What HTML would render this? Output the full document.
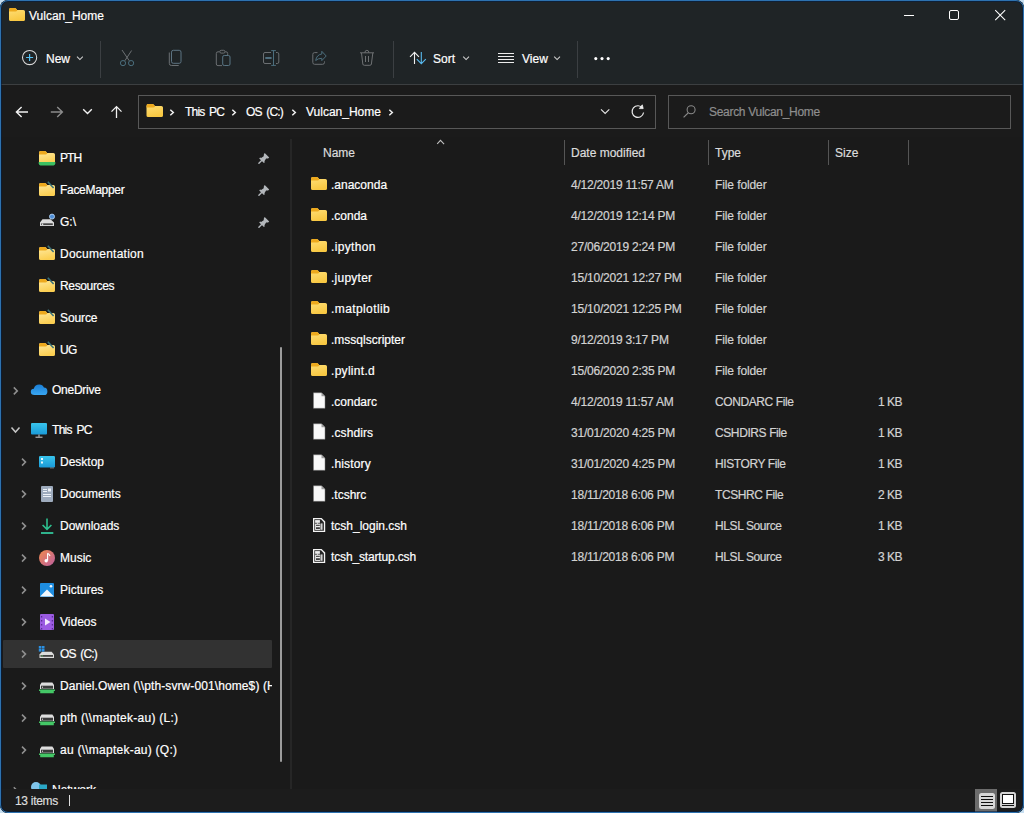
<!DOCTYPE html>
<html><head><meta charset="utf-8">
<style>
*{box-sizing:border-box;margin:0;padding:0}
html,body{width:1024px;height:813px;overflow:hidden;background:#c6def0}
body{font-family:"Liberation Sans",sans-serif;font-size:12px;color:#fff;position:relative}
.win{position:absolute;left:0;top:0;width:1024px;height:813px;border-radius:8px;overflow:hidden;background:#1a1a1a}
.a{position:absolute}
.t{position:absolute;white-space:nowrap;line-height:14px;font-size:12px;-webkit-text-stroke:0.2px currentColor}
.ov{position:absolute;left:0;top:0}
.border{position:absolute;left:0;top:0;width:1024px;height:813px;border:1px solid #2d72b0;border-radius:8px;box-shadow:inset 0 0 0 1px rgba(0,30,70,0.55)}
</style></head><body>
<div class="win">
<div class="a" style="left:0px;top:0px;width:1024px;height:84px;background:#1f2426;"></div>
<div class="a" style="left:0px;top:84px;width:1024px;height:1px;background:#3c3f41;"></div>
<div class="a" style="left:0px;top:85px;width:1024px;height:52px;background:#1b1b1b;"></div>
<div class="t" style="left:29px;top:9px">Vulcan_Home</div>
<div class="a" style="left:904px;top:15px;width:10px;height:1px;background:#ffffff;"></div>
<div class="t" style="left:46px;top:52px">New</div>
<div class="t" style="left:433px;top:52px">Sort</div>
<div class="t" style="left:522px;top:52px">View</div>
<div class="a" style="left:138px;top:95px;width:518px;height:34px;border:1px solid #585858"></div>
<div class="t" style="left:185px;top:105px;letter-spacing:-0.8px;word-spacing:2px">This PC</div>
<div class="t" style="left:246px;top:105px;letter-spacing:-0.8px;word-spacing:2px">OS (C:)</div>
<div class="t" style="left:306px;top:105px">Vulcan_Home</div>
<div class="a" style="left:668px;top:95px;width:343px;height:34px;border:1px solid #585858"></div>
<div class="t" style="left:709px;top:105px;color:#8e8e8e;letter-spacing:-0.3px">Search Vulcan_Home</div>
<div class="a" style="left:3px;top:640px;width:269px;height:28px;background:#323232;border-radius:1px"></div>
<div class="a" style="left:0;top:137px;width:272px;height:652px;overflow:hidden"><div class="t" style="left:60px;top:14px;letter-spacing:-0.9px">PTH</div><div class="t" style="left:60px;top:46px;letter-spacing:-0.3px">FaceMapper</div><div class="t" style="left:60px;top:78px">G:\</div><div class="t" style="left:60px;top:110px;letter-spacing:0.25px">Documentation</div><div class="t" style="left:60px;top:142px;letter-spacing:-0.35px">Resources</div><div class="t" style="left:60px;top:174px;letter-spacing:-0.1px">Source</div><div class="t" style="left:60px;top:206px;letter-spacing:-0.6px">UG</div><div class="t" style="left:52px;top:246px;letter-spacing:-0.25px">OneDrive</div><div class="t" style="left:52px;top:286px;letter-spacing:-0.7px;word-spacing:2px">This PC</div><div class="t" style="left:60px;top:318px">Desktop</div><div class="t" style="left:60px;top:350px">Documents</div><div class="t" style="left:60px;top:382px">Downloads</div><div class="t" style="left:60px;top:414px">Music</div><div class="t" style="left:60px;top:446px">Pictures</div><div class="t" style="left:60px;top:478px">Videos</div><div class="t" style="left:60px;top:510px;letter-spacing:-0.8px;word-spacing:2px">OS (C:)</div><div class="t" style="left:60px;top:542px;letter-spacing:0.1px;width:212px;overflow:hidden">Daniel.Owen (\\pth-svrw-001\home$) (H:)</div><div class="t" style="left:60px;top:574px;letter-spacing:0.25px">pth (\\maptek-au) (L:)</div><div class="t" style="left:60px;top:606px;letter-spacing:0.25px">au (\\maptek-au) (Q:)</div><div class="t" style="left:52px;top:646px">Network</div></div>
<div class="a" style="left:280px;top:347px;width:2px;height:415px;background:#9c9c9c;border-radius:1px"></div>
<div class="a" style="left:290px;top:139px;width:2px;height:650px;background:#262626;"></div>
<div class="t" style="left:323px;top:146px;color:#dcdcdc">Name</div>
<div class="t" style="left:571px;top:146px;color:#dcdcdc">Date modified</div>
<div class="t" style="left:715px;top:146px;color:#dcdcdc">Type</div>
<div class="t" style="left:835px;top:146px;color:#dcdcdc">Size</div>
<div class="t" style="left:331px;top:178px">.anaconda</div>
<div class="t" style="left:571px;top:178px;color:#d2d2d2;letter-spacing:-0.22px">4/12/2019 11:57 AM</div>
<div class="t" style="left:715px;top:178px;color:#d2d2d2;letter-spacing:-0.1px">File folder</div>
<div class="t" style="left:331px;top:209px">.conda</div>
<div class="t" style="left:571px;top:209px;color:#d2d2d2;letter-spacing:-0.22px">4/12/2019 12:14 PM</div>
<div class="t" style="left:715px;top:209px;color:#d2d2d2;letter-spacing:-0.1px">File folder</div>
<div class="t" style="left:331px;top:240px;letter-spacing:0.35px">.ipython</div>
<div class="t" style="left:571px;top:240px;color:#d2d2d2;letter-spacing:-0.22px">27/06/2019 2:24 PM</div>
<div class="t" style="left:715px;top:240px;color:#d2d2d2;letter-spacing:-0.1px">File folder</div>
<div class="t" style="left:331px;top:271px;letter-spacing:0.25px">.jupyter</div>
<div class="t" style="left:571px;top:271px;color:#d2d2d2;letter-spacing:-0.22px">15/10/2021 12:27 PM</div>
<div class="t" style="left:715px;top:271px;color:#d2d2d2;letter-spacing:-0.1px">File folder</div>
<div class="t" style="left:331px;top:302px;letter-spacing:0.4px">.matplotlib</div>
<div class="t" style="left:571px;top:302px;color:#d2d2d2;letter-spacing:-0.22px">15/10/2021 12:25 PM</div>
<div class="t" style="left:715px;top:302px;color:#d2d2d2;letter-spacing:-0.1px">File folder</div>
<div class="t" style="left:331px;top:333px">.mssqlscripter</div>
<div class="t" style="left:571px;top:333px;color:#d2d2d2;letter-spacing:-0.22px">9/12/2019 3:17 PM</div>
<div class="t" style="left:715px;top:333px;color:#d2d2d2;letter-spacing:-0.1px">File folder</div>
<div class="t" style="left:331px;top:364px;letter-spacing:0.3px">.pylint.d</div>
<div class="t" style="left:571px;top:364px;color:#d2d2d2;letter-spacing:-0.22px">15/06/2020 2:35 PM</div>
<div class="t" style="left:715px;top:364px;color:#d2d2d2;letter-spacing:-0.1px">File folder</div>
<div class="t" style="left:331px;top:395px">.condarc</div>
<div class="t" style="left:571px;top:395px;color:#d2d2d2;letter-spacing:-0.22px">4/12/2019 11:57 AM</div>
<div class="t" style="left:715px;top:395px;color:#d2d2d2;letter-spacing:-0.4px">CONDARC File</div>
<div class="t" style="left:802px;top:395px;width:100px;text-align:right;color:#d2d2d2;letter-spacing:-0.5px">1 KB</div>
<div class="t" style="left:331px;top:426px;letter-spacing:0.1px">.cshdirs</div>
<div class="t" style="left:571px;top:426px;color:#d2d2d2;letter-spacing:-0.22px">31/01/2020 4:25 PM</div>
<div class="t" style="left:715px;top:426px;color:#d2d2d2;letter-spacing:-0.4px">CSHDIRS File</div>
<div class="t" style="left:802px;top:426px;width:100px;text-align:right;color:#d2d2d2;letter-spacing:-0.5px">1 KB</div>
<div class="t" style="left:331px;top:457px;letter-spacing:0.15px">.history</div>
<div class="t" style="left:571px;top:457px;color:#d2d2d2;letter-spacing:-0.22px">31/01/2020 4:25 PM</div>
<div class="t" style="left:715px;top:457px;color:#d2d2d2;letter-spacing:-0.4px">HISTORY File</div>
<div class="t" style="left:802px;top:457px;width:100px;text-align:right;color:#d2d2d2;letter-spacing:-0.5px">1 KB</div>
<div class="t" style="left:331px;top:488px">.tcshrc</div>
<div class="t" style="left:571px;top:488px;color:#d2d2d2;letter-spacing:-0.22px">18/11/2018 6:06 PM</div>
<div class="t" style="left:715px;top:488px;color:#d2d2d2;letter-spacing:-0.4px">TCSHRC File</div>
<div class="t" style="left:802px;top:488px;width:100px;text-align:right;color:#d2d2d2;letter-spacing:-0.5px">2 KB</div>
<div class="t" style="left:331px;top:519px">tcsh_login.csh</div>
<div class="t" style="left:571px;top:519px;color:#d2d2d2;letter-spacing:-0.22px">18/11/2018 6:06 PM</div>
<div class="t" style="left:715px;top:519px;color:#d2d2d2;letter-spacing:-0.4px">HLSL Source</div>
<div class="t" style="left:802px;top:519px;width:100px;text-align:right;color:#d2d2d2;letter-spacing:-0.5px">1 KB</div>
<div class="t" style="left:331px;top:550px;letter-spacing:-0.15px">tcsh_startup.csh</div>
<div class="t" style="left:571px;top:550px;color:#d2d2d2;letter-spacing:-0.22px">18/11/2018 6:06 PM</div>
<div class="t" style="left:715px;top:550px;color:#d2d2d2;letter-spacing:-0.4px">HLSL Source</div>
<div class="t" style="left:802px;top:550px;width:100px;text-align:right;color:#d2d2d2;letter-spacing:-0.5px">3 KB</div>
<div class="a" style="left:0px;top:789px;width:1024px;height:24px;background:#1c1c1c;"></div>
<div class="t" style="left:15px;top:794px;color:#dedede;letter-spacing:-0.3px">13 items</div>
<div class="a" style="left:69px;top:795px;width:1px;height:11px;background:#dedede;"></div>
<div class="a" style="left:975px;top:789px;width:22px;height:23px;background:#6c6c6c;"></div>
<div class="a" style="left:979px;top:793px;width:16px;height:16px;background:#d8d8d8;border-radius:2.5px"></div>
<div class="a" style="left:981px;top:796px;width:12px;height:1px;background:#111;"></div>
<div class="a" style="left:981px;top:799px;width:12px;height:1px;background:#111;"></div>
<div class="a" style="left:981px;top:802px;width:12px;height:1px;background:#111;"></div>
<div class="a" style="left:981px;top:805px;width:12px;height:1px;background:#111;"></div>
<div class="a" style="left:1000px;top:792px;width:16px;height:16px;background:#d4d4d4;border-radius:2.5px"></div>
<div class="a" style="left:1002px;top:794px;width:12px;height:10px;background:#fff;border:1px solid #111"></div>
<div class="a" style="left:1002px;top:805px;width:12px;height:1px;background:#111;"></div>
<svg class="ov" width="1024" height="813" viewBox="0 0 1024 813"><defs>
<linearGradient id="fg" x1="0" y1="0" x2="0.3" y2="1"><stop offset="0" stop-color="#ffe07a"/><stop offset="1" stop-color="#f8c843"/></linearGradient>
<linearGradient id="fgn" x1="0" y1="0" x2="0.3" y2="1"><stop offset="0" stop-color="#ffeba3"/><stop offset="1" stop-color="#fbcf52"/></linearGradient>
<linearGradient id="mg" x1="0" y1="0" x2="1" y2="1"><stop offset="0" stop-color="#f08a4c"/><stop offset="1" stop-color="#bd5fa0"/></linearGradient>
<linearGradient id="pc" x1="0" y1="0" x2="0" y2="1"><stop offset="0" stop-color="#38c4ec"/><stop offset="1" stop-color="#1a9ad8"/></linearGradient>
<linearGradient id="od" x1="0" y1="0" x2="0" y2="1"><stop offset="0" stop-color="#1b7fd6"/><stop offset="1" stop-color="#39a6f2"/></linearGradient>
<clipPath id="navclip"><rect x="0" y="137" width="272" height="652"/></clipPath>
</defs>
<path d="M9.0 10.3 Q9.0 8.0 10.6 8.0 H14.6 Q15.4 8.0 15.9 8.6 L17.1 9.9 H23.4 Q25.0 9.9 25.0 11.5 V19.4 Q25.0 21.0 23.4 21.0 H10.6 Q9.0 21.0 9.0 19.4Z" fill="url(#fg)"/>
<path d="M9.0 10.3 Q9.0 8.0 10.6 8.0 H14.6 Q15.4 8.0 15.9 8.6 L17.4 10.3 Q16.7 11.6 15.4 11.6 H9.0Z" fill="#eda91d"/>
<rect x="949.5" y="10.5" width="9" height="9" rx="1.5" fill="none" stroke="#fff" stroke-width="1"/>
<path d="M995.2 10.2 L1005.2 20.2 M1005.2 10.2 L995.2 20.2" stroke="#fff" stroke-width="1.05"/>
<circle cx="29.6" cy="57.5" r="7.1" fill="none" stroke="#dadada" stroke-width="1.05"/>
<path d="M29.6 54 V61 M26.1 57.5 H33.1" stroke="#55c0f2" stroke-width="1.2"/>
<path d="M77 56.6 L79.9 59.6 L82.8 56.6" fill="none" stroke="#d0d0d0" stroke-width="1.05"/>
<path d="M100.5 41 V78" stroke="#3b3f42" stroke-width="1"/>
<path d="M393.5 41 V78" stroke="#3b3f42" stroke-width="1"/>
<path d="M577.5 41 V78" stroke="#3b3f42" stroke-width="1"/>
<path d="M122 50 L129.3 60.8 M131.6 50.5 L124.8 60.8" stroke="#6d7174" stroke-width="1"/>
<circle cx="123" cy="63.1" r="2.6" fill="none" stroke="#4b6f7e" stroke-width="1"/><circle cx="131.1" cy="63.1" r="2.6" fill="none" stroke="#4b6f7e" stroke-width="1"/>
<rect x="171.5" y="50.3" width="9.5" height="13" rx="1.8" fill="none" stroke="#5d7483" stroke-width="1"/>
<path d="M169.3 52.5 V63.4 Q169.3 65.5 171.4 65.5 H178.7" fill="none" stroke="#6b7073" stroke-width="1"/>
<path d="M219.5 51.8 H218 Q216.3 51.8 216.3 53.5 V64 Q216.3 65.6 218 65.6 H222" fill="none" stroke="#6b6f72" stroke-width="1"/>
<path d="M225.2 51.8 H226 Q227.7 51.8 227.7 53.5 V55" fill="none" stroke="#6b6f72" stroke-width="1"/>
<rect x="219.8" y="50.3" width="5.2" height="2.8" rx="1.4" fill="none" stroke="#6b6f72" stroke-width="1"/>
<rect x="222.7" y="55.5" width="7.3" height="10" rx="1.5" fill="none" stroke="#587483" stroke-width="1"/>
<path d="M271 52.5 H265 Q263.5 52.5 263.5 54 V62 Q263.5 63.5 265 63.5 H271 M276 52.5 H277.3 Q278.8 52.5 278.8 54 V62 Q278.8 63.5 277.3 63.5 H276" fill="none" stroke="#6b6f72" stroke-width="1"/>
<path d="M273.5 50.5 V65.5 M271.2 50.6 H275.9 M271.2 65.4 H275.9" stroke="#4c6e7d" stroke-width="1"/>
<path d="M265.3 58 H271.6" stroke="#557888" stroke-width="1.8"/>
<path d="M317.5 52.6 H314.6 Q312.8 52.6 312.8 54.4 V62.4 Q312.8 64.3 314.6 64.3 H322.6 Q324.5 64.3 324.5 62.4 V61.4" fill="none" stroke="#6b6f72" stroke-width="1"/>
<path d="M321.8 51.3 L326.2 56 L321.8 60.6 V58.3 Q318 58.3 315.7 60.5 Q316.6 54.7 321.8 54 Z" fill="none" stroke="#4c6e7d" stroke-width="1" stroke-linejoin="round"/>
<path d="M360 52.8 H374 M364.9 52.8 Q364.9 50.3 366.9 50.3 Q368.9 50.3 368.9 52.8 M361.5 53 L362.8 64 Q363 65.3 364.3 65.3 H369.9 Q371.2 65.3 371.4 64 L372.8 53 M365.5 56 V62 M368.5 56 V62" fill="none" stroke="#6e7173" stroke-width="1"/>
<path d="M414.5 64 V52.3 M410 56.8 L414.5 52.3 L419 56.8" fill="none" stroke="#f0f0f0" stroke-width="1.1"/>
<path d="M421.3 52 V63.7 M416.8 59.2 L421.3 63.7 L425.8 59.2" fill="none" stroke="#58b9ee" stroke-width="1.1"/>
<path d="M463.2 56.6 L466.09999999999997 59.6 L469.0 56.6" fill="none" stroke="#d0d0d0" stroke-width="1.05"/>
<path d="M498 53.5 H514 M498 56.5 H514 M498 59.5 H514 M498 62.5 H514" stroke="#ececec" stroke-width="1.1"/>
<path d="M554.2 56.6 L557.1 59.6 L560.0 56.6" fill="none" stroke="#d0d0d0" stroke-width="1.05"/>
<circle cx="595.8" cy="58.6" r="1.55" fill="#fff"/>
<circle cx="602" cy="58.6" r="1.55" fill="#fff"/>
<circle cx="608.2" cy="58.6" r="1.55" fill="#fff"/>
<path d="M28 112 H16.8 M21.6 106.9 L16.4 112 L21.6 117.1" fill="none" stroke="#f2f2f2" stroke-width="1.4"/>
<path d="M50.8 112 H62 M57.2 106.9 L62.4 112 L57.2 117.1" fill="none" stroke="#8c8c8c" stroke-width="1.4"/>
<path d="M83.2 109.3 L87.5 113.6 L91.8 109.3" fill="none" stroke="#f2f2f2" stroke-width="1.4"/>
<path d="M116.5 118 V106.6 M111.5 111.6 L116.5 106.6 L121.5 111.6" fill="none" stroke="#f2f2f2" stroke-width="1.3"/>
<path d="M146.5 106.3 Q146.5 104.0 148.15 104.0 H152.28 Q153.1 104.0 153.62 104.6 L154.85 105.9 H161.35 Q163.0 105.9 163.0 107.5 V115.4 Q163.0 117.0 161.35 117.0 H148.15 Q146.5 117.0 146.5 115.4Z" fill="url(#fg)"/>
<path d="M146.5 106.3 Q146.5 104.0 148.15 104.0 H152.28 Q153.1 104.0 153.62 104.6 L155.16 106.3 Q154.44 107.6 153.1 107.6 H146.5Z" fill="#eda91d"/>
<path d="M170.3 109.8 L173.3 112.5 L170.3 115.2" fill="none" stroke="#f0f0f0" stroke-width="1.5"/>
<path d="M232.3 109.8 L235.3 112.5 L232.3 115.2" fill="none" stroke="#f0f0f0" stroke-width="1.5"/>
<path d="M292.3 109.8 L295.3 112.5 L292.3 115.2" fill="none" stroke="#f0f0f0" stroke-width="1.5"/>
<path d="M389.3 109.8 L392.3 112.5 L389.3 115.2" fill="none" stroke="#f0f0f0" stroke-width="1.5"/>
<path d="M601 109.3 L605.15 113.5 L609.3 109.3" fill="none" stroke="#e6e6e6" stroke-width="1.1"/>
<path d="M642.6 108.2 A5.8 5.8 0 1 0 643.6 112.5" fill="none" stroke="#eeeeee" stroke-width="1.2"/>
<path d="M642.3 104.8 L643.2 108.6 L639.3 108.6Z" fill="#eeeeee" stroke="#eeeeee" stroke-width="0.8" stroke-linejoin="round"/>
<circle cx="691.1" cy="109.7" r="4" fill="none" stroke="#8a8a8a" stroke-width="1.05"/>
<path d="M688.2 112.8 L683.6 117.4" stroke="#8a8a8a" stroke-width="1.2"/>
<g clip-path="url(#navclip)"><path d="M39.0 153.3 Q39.0 151.0 40.6 151.0 H44.6 Q45.4 151.0 45.9 151.6 L47.1 152.9 H53.4 Q55.0 152.9 55.0 154.5 V162.4 Q55.0 164.0 53.4 164.0 H40.6 Q39.0 164.0 39.0 162.4Z" fill="url(#fgn)"/><path d="M39.0 153.3 Q39.0 151.0 40.6 151.0 H44.6 Q45.4 151.0 45.9 151.6 L47.4 153.3 Q46.7 154.6 45.4 154.6 H39.0Z" fill="#eda91d"/><path d="M38.7 162.0 H55.3 V163.6 Q55.3 165.4 53.6 165.4 H40.4 Q38.7 165.4 38.7 163.6Z" fill="#3cc062"/><path d="M264.7 153.10000000000002 L269.2 157.60000000000002 L268.1 158.4 L266.1 158.60000000000002 L264.4 161.20000000000002 L264.8 162.20000000000002 L263.9 163.10000000000002 L259.2 158.4 L260.1 157.5 L261.1 157.9 L263.7 156.20000000000002 L263.9 154.20000000000002Z" fill="#b3b7bb"/><path d="M261.9 160.20000000000002 L258.9 163.20000000000002" stroke="#b3b7bb" stroke-width="1.4" stroke-linecap="round"/><path d="M39.0 185.3 Q39.0 183.0 40.6 183.0 H44.6 Q45.4 183.0 45.9 183.6 L47.1 184.9 H53.4 Q55.0 184.9 55.0 186.5 V194.4 Q55.0 196.0 53.4 196.0 H40.6 Q39.0 196.0 39.0 194.4Z" fill="url(#fgn)"/><path d="M39.0 185.3 Q39.0 183.0 40.6 183.0 H44.6 Q45.4 183.0 45.9 183.6 L47.4 185.3 Q46.7 186.6 45.4 186.6 H39.0Z" fill="#eda91d"/><path d="M47.8 181.7 L53.6 188.0" stroke="#3b727b" stroke-width="1.6"/><path d="M264.7 185.10000000000002 L269.2 189.60000000000002 L268.1 190.4 L266.1 190.60000000000002 L264.4 193.20000000000002 L264.8 194.20000000000002 L263.9 195.10000000000002 L259.2 190.4 L260.1 189.5 L261.1 189.9 L263.7 188.20000000000002 L263.9 186.20000000000002Z" fill="#b3b7bb"/><path d="M261.9 192.20000000000002 L258.9 195.20000000000002" stroke="#b3b7bb" stroke-width="1.4" stroke-linecap="round"/><path d="M42.5 219.2 H50.5 L54 222.6 V226 H40 V222.6Z" fill="#dcdcdc"/><rect x="41.2" y="223.3" width="11.6" height="1.8" fill="#444"/><rect x="42" y="223.6" width="1.2" height="1.2" fill="#fff"/><circle cx="52" cy="216.6" r="2.5" fill="#4f8fd8" stroke="#b4d4f4" stroke-width="0.9"/><path d="M264.7 217.10000000000002 L269.2 221.60000000000002 L268.1 222.4 L266.1 222.60000000000002 L264.4 225.20000000000002 L264.8 226.20000000000002 L263.9 227.10000000000002 L259.2 222.4 L260.1 221.5 L261.1 221.9 L263.7 220.20000000000002 L263.9 218.20000000000002Z" fill="#b3b7bb"/><path d="M261.9 224.20000000000002 L258.9 227.20000000000002" stroke="#b3b7bb" stroke-width="1.4" stroke-linecap="round"/><path d="M39.0 249.3 Q39.0 247.0 40.6 247.0 H44.6 Q45.4 247.0 45.9 247.6 L47.1 248.9 H53.4 Q55.0 248.9 55.0 250.5 V258.4 Q55.0 260.0 53.4 260.0 H40.6 Q39.0 260.0 39.0 258.4Z" fill="url(#fgn)"/><path d="M39.0 249.3 Q39.0 247.0 40.6 247.0 H44.6 Q45.4 247.0 45.9 247.6 L47.4 249.3 Q46.7 250.6 45.4 250.6 H39.0Z" fill="#eda91d"/><path d="M47.8 245.7 L53.6 252.0" stroke="#3b727b" stroke-width="1.6"/><path d="M39.0 281.3 Q39.0 279.0 40.6 279.0 H44.6 Q45.4 279.0 45.9 279.6 L47.1 280.9 H53.4 Q55.0 280.9 55.0 282.5 V290.4 Q55.0 292.0 53.4 292.0 H40.6 Q39.0 292.0 39.0 290.4Z" fill="url(#fgn)"/><path d="M39.0 281.3 Q39.0 279.0 40.6 279.0 H44.6 Q45.4 279.0 45.9 279.6 L47.4 281.3 Q46.7 282.6 45.4 282.6 H39.0Z" fill="#eda91d"/><path d="M47.8 277.7 L53.6 284.0" stroke="#3b727b" stroke-width="1.6"/><path d="M39.0 313.3 Q39.0 311.0 40.6 311.0 H44.6 Q45.4 311.0 45.9 311.6 L47.1 312.9 H53.4 Q55.0 312.9 55.0 314.5 V322.4 Q55.0 324.0 53.4 324.0 H40.6 Q39.0 324.0 39.0 322.4Z" fill="url(#fgn)"/><path d="M39.0 313.3 Q39.0 311.0 40.6 311.0 H44.6 Q45.4 311.0 45.9 311.6 L47.4 313.3 Q46.7 314.6 45.4 314.6 H39.0Z" fill="#eda91d"/><path d="M47.8 309.7 L53.6 316.0" stroke="#3b727b" stroke-width="1.6"/><path d="M39.0 345.3 Q39.0 343.0 40.6 343.0 H44.6 Q45.4 343.0 45.9 343.6 L47.1 344.9 H53.4 Q55.0 344.9 55.0 346.5 V354.4 Q55.0 356.0 53.4 356.0 H40.6 Q39.0 356.0 39.0 354.4Z" fill="url(#fgn)"/><path d="M39.0 345.3 Q39.0 343.0 40.6 343.0 H44.6 Q45.4 343.0 45.9 343.6 L47.4 345.3 Q46.7 346.6 45.4 346.6 H39.0Z" fill="#eda91d"/><path d="M47.8 341.7 L53.6 348.0" stroke="#3b727b" stroke-width="1.6"/><path d="M13.8 387.40000000000003 L17.3 390.90000000000003 L13.8 394.40000000000003" fill="none" stroke="#8f8f8f" stroke-width="1.55"/><path d="M34.5 395 Q30.8 395 30.8 391.8 Q30.8 389 33.8 388.8 Q35 384.6 39.3 384.6 Q42.7 384.6 43.9 387.6 Q47.4 387.9 47.4 391.4 Q47.4 395 44 395Z" fill="url(#od)"/><path d="M11.5 427.6 L15.5 432.0 L19.5 427.6" fill="none" stroke="#c4c4c4" stroke-width="1.55"/><rect x="31" y="423" width="16" height="11.5" rx="1" fill="url(#pc)"/><path d="M39 434.5 V436.8 M35.5 437.2 H42.5" stroke="#cfcfcf" stroke-width="1"/><path d="M22.0 458.6 L25.5 462.1 L22.0 465.6" fill="none" stroke="#8f8f8f" stroke-width="1.55"/><path d="M22.0 490.6 L25.5 494.1 L22.0 497.6" fill="none" stroke="#8f8f8f" stroke-width="1.55"/><path d="M22.0 522.5999999999999 L25.5 526.0999999999999 L22.0 529.5999999999999" fill="none" stroke="#8f8f8f" stroke-width="1.55"/><path d="M22.0 554.5999999999999 L25.5 558.0999999999999 L22.0 561.5999999999999" fill="none" stroke="#8f8f8f" stroke-width="1.55"/><path d="M22.0 586.5999999999999 L25.5 590.0999999999999 L22.0 593.5999999999999" fill="none" stroke="#8f8f8f" stroke-width="1.55"/><path d="M22.0 618.5999999999999 L25.5 622.0999999999999 L22.0 625.5999999999999" fill="none" stroke="#8f8f8f" stroke-width="1.55"/><path d="M22.0 650.5999999999999 L25.5 654.0999999999999 L22.0 657.5999999999999" fill="none" stroke="#8f8f8f" stroke-width="1.55"/><path d="M22.0 682.5999999999999 L25.5 686.0999999999999 L22.0 689.5999999999999" fill="none" stroke="#8f8f8f" stroke-width="1.55"/><path d="M22.0 714.5999999999999 L25.5 718.0999999999999 L22.0 721.5999999999999" fill="none" stroke="#8f8f8f" stroke-width="1.55"/><path d="M22.0 746.5999999999999 L25.5 750.0999999999999 L22.0 753.5999999999999" fill="none" stroke="#8f8f8f" stroke-width="1.55"/><rect x="39" y="456" width="16" height="11.5" rx="1.3" fill="url(#pc)"/><rect x="41" y="458" width="2" height="2" fill="#e6f6fc"/><rect x="41" y="461.5" width="2" height="2" fill="#e6f6fc"/><rect x="50.5" y="467.5" width="1" height="1" fill="#bbb"/><rect x="52.5" y="467.5" width="1" height="1" fill="#bbb"/><rect x="41" y="486" width="12" height="16" rx="1" fill="#9eabbd"/><path d="M43 489.5 H47 M43 491.5 H47 M43 494.5 H51 M43 496.5 H51" stroke="#eef2f8" stroke-width="1"/><rect x="48" y="488.5" width="3" height="3" fill="#eef2f8"/><path d="M47 518.5 V529.2 M42.6 525 L47 529.4 L51.4 525" fill="none" stroke="#2dbf8e" stroke-width="1.6"/><path d="M41 533 H53.3" stroke="#33c59a" stroke-width="1.8"/><circle cx="47" cy="558" r="8" fill="url(#mg)"/><path d="M47.6 553.3 V560.5 M47.6 553.3 Q49.6 554.4 50 556" fill="none" stroke="#fff" stroke-width="1.15"/><circle cx="46.2" cy="560.8" r="1.7" fill="#fff"/><rect x="40" y="583" width="14" height="14" rx="1" fill="#1e8de0"/><path d="M40 596.6 L47 589.6 L54 596.6Z" fill="#f2f7fc"/><circle cx="51" cy="586.3" r="1.3" fill="#f2f7fc"/><rect x="40" y="614" width="14" height="16" rx="1" fill="#9b5be2"/><path d="M45 618.5 V625.5 L50.5 622Z" fill="#f3eafd"/><path d="M41.6 616 V617.6 M41.6 620 V621.6 M41.6 624 V625.6 M41.6 628 V629.4 M52.4 616 V617.6 M52.4 620 V621.6 M52.4 624 V625.6 M52.4 628 V629.4" stroke="#5a2c98" stroke-width="1.3"/><path d="M42 651.8 H51.6 L54 654.4 V658 H39.5 V654.4Z" fill="#dcdcdc"/><rect x="40.5" y="655" width="12.5" height="1.8" fill="#444"/><rect x="41.5" y="655.3" width="1.2" height="1.2" fill="#6fd07a"/><rect x="38.8" y="646" width="2.6" height="2.6" fill="#2b90e2"/><rect x="41.9" y="646" width="2.6" height="2.6" fill="#2b90e2"/><rect x="38.8" y="649" width="2.6" height="2.6" fill="#2b90e2"/><rect x="41.9" y="649" width="2.6" height="2.6" fill="#2b90e2"/><path d="M41.6 682.5 H52.4 L54 685.1 V689.1 H40 V685.1Z" fill="#dddddd"/><rect x="41" y="685.7" width="12" height="3" fill="#3b3b3b"/><rect x="42" y="686.7" width="1" height="1" fill="#eee"/><path d="M39 689.5 H55 V691.1 H53.8 V693.3 H40.2 V691.1 H39Z" fill="#44c766"/><path d="M41.6 714.5 H52.4 L54 717.1 V721.1 H40 V717.1Z" fill="#dddddd"/><rect x="41" y="717.7" width="12" height="3" fill="#3b3b3b"/><rect x="42" y="718.7" width="1" height="1" fill="#eee"/><path d="M39 721.5 H55 V723.1 H53.8 V725.3 H40.2 V723.1 H39Z" fill="#44c766"/><path d="M41.6 746.5 H52.4 L54 749.1 V753.1 H40 V749.1Z" fill="#dddddd"/><rect x="41" y="749.7" width="12" height="3" fill="#3b3b3b"/><rect x="42" y="750.7" width="1" height="1" fill="#eee"/><path d="M39 753.5 H55 V755.1 H53.8 V757.3 H40.2 V755.1 H39Z" fill="#44c766"/><path d="M13.8 787.3 L17.3 790.8 L13.8 794.3" fill="none" stroke="#8f8f8f" stroke-width="1.55"/><circle cx="36" cy="787" r="5" fill="#7fc4ea"/><rect x="39" y="784.5" width="8" height="5" fill="#2aa7c6"/></g>
<path d="M437.2 143.8 L440.5 140.3 L444.1 144.1" fill="none" stroke="#c0c0c0" stroke-width="1.05"/>
<path d="M564.5 140 V165" stroke="#555" stroke-width="1"/>
<path d="M708.5 140 V165" stroke="#555" stroke-width="1"/>
<path d="M828.5 140 V165" stroke="#555" stroke-width="1"/>
<path d="M908.5 140 V165" stroke="#555" stroke-width="1"/>
<path d="M311.0 179.3 Q311.0 177.0 312.6 177.0 H316.6 Q317.4 177.0 317.9 177.6 L319.1 178.9 H325.4 Q327.0 178.9 327.0 180.5 V188.4 Q327.0 190.0 325.4 190.0 H312.6 Q311.0 190.0 311.0 188.4Z" fill="url(#fg)"/>
<path d="M311.0 179.3 Q311.0 177.0 312.6 177.0 H316.6 Q317.4 177.0 317.9 177.6 L319.4 179.3 Q318.7 180.6 317.4 180.6 H311.0Z" fill="#eda91d"/>
<path d="M311.0 210.3 Q311.0 208.0 312.6 208.0 H316.6 Q317.4 208.0 317.9 208.6 L319.1 209.9 H325.4 Q327.0 209.9 327.0 211.5 V219.4 Q327.0 221.0 325.4 221.0 H312.6 Q311.0 221.0 311.0 219.4Z" fill="url(#fg)"/>
<path d="M311.0 210.3 Q311.0 208.0 312.6 208.0 H316.6 Q317.4 208.0 317.9 208.6 L319.4 210.3 Q318.7 211.6 317.4 211.6 H311.0Z" fill="#eda91d"/>
<path d="M311.0 241.3 Q311.0 239.0 312.6 239.0 H316.6 Q317.4 239.0 317.9 239.6 L319.1 240.9 H325.4 Q327.0 240.9 327.0 242.5 V250.4 Q327.0 252.0 325.4 252.0 H312.6 Q311.0 252.0 311.0 250.4Z" fill="url(#fg)"/>
<path d="M311.0 241.3 Q311.0 239.0 312.6 239.0 H316.6 Q317.4 239.0 317.9 239.6 L319.4 241.3 Q318.7 242.6 317.4 242.6 H311.0Z" fill="#eda91d"/>
<path d="M311.0 272.3 Q311.0 270.0 312.6 270.0 H316.6 Q317.4 270.0 317.9 270.6 L319.1 271.9 H325.4 Q327.0 271.9 327.0 273.5 V281.4 Q327.0 283.0 325.4 283.0 H312.6 Q311.0 283.0 311.0 281.4Z" fill="url(#fg)"/>
<path d="M311.0 272.3 Q311.0 270.0 312.6 270.0 H316.6 Q317.4 270.0 317.9 270.6 L319.4 272.3 Q318.7 273.6 317.4 273.6 H311.0Z" fill="#eda91d"/>
<path d="M311.0 303.3 Q311.0 301.0 312.6 301.0 H316.6 Q317.4 301.0 317.9 301.6 L319.1 302.9 H325.4 Q327.0 302.9 327.0 304.5 V312.4 Q327.0 314.0 325.4 314.0 H312.6 Q311.0 314.0 311.0 312.4Z" fill="url(#fg)"/>
<path d="M311.0 303.3 Q311.0 301.0 312.6 301.0 H316.6 Q317.4 301.0 317.9 301.6 L319.4 303.3 Q318.7 304.6 317.4 304.6 H311.0Z" fill="#eda91d"/>
<path d="M311.0 334.3 Q311.0 332.0 312.6 332.0 H316.6 Q317.4 332.0 317.9 332.6 L319.1 333.9 H325.4 Q327.0 333.9 327.0 335.5 V343.4 Q327.0 345.0 325.4 345.0 H312.6 Q311.0 345.0 311.0 343.4Z" fill="url(#fg)"/>
<path d="M311.0 334.3 Q311.0 332.0 312.6 332.0 H316.6 Q317.4 332.0 317.9 332.6 L319.4 334.3 Q318.7 335.6 317.4 335.6 H311.0Z" fill="#eda91d"/>
<path d="M311.0 365.3 Q311.0 363.0 312.6 363.0 H316.6 Q317.4 363.0 317.9 363.6 L319.1 364.9 H325.4 Q327.0 364.9 327.0 366.5 V374.4 Q327.0 376.0 325.4 376.0 H312.6 Q311.0 376.0 311.0 374.4Z" fill="url(#fg)"/>
<path d="M311.0 365.3 Q311.0 363.0 312.6 363.0 H316.6 Q317.4 363.0 317.9 363.6 L319.4 365.3 Q318.7 366.6 317.4 366.6 H311.0Z" fill="#eda91d"/>
<path d="M313.5 392.8 H321.5 L325 396.3 V408.3 H313.5Z" fill="#f8f8f8" stroke="#7a7a7a" stroke-width="0.5"/>
<path d="M321.5 392.8 V396.3 H325Z" fill="#9c9c9c"/>
<path d="M313.5 423.8 H321.5 L325 427.3 V439.3 H313.5Z" fill="#f8f8f8" stroke="#7a7a7a" stroke-width="0.5"/>
<path d="M321.5 423.8 V427.3 H325Z" fill="#9c9c9c"/>
<path d="M313.5 454.8 H321.5 L325 458.3 V470.3 H313.5Z" fill="#f8f8f8" stroke="#7a7a7a" stroke-width="0.5"/>
<path d="M321.5 454.8 V458.3 H325Z" fill="#9c9c9c"/>
<path d="M313.5 485.8 H321.5 L325 489.3 V501.3 H313.5Z" fill="#f8f8f8" stroke="#7a7a7a" stroke-width="0.5"/>
<path d="M321.5 485.8 V489.3 H325Z" fill="#9c9c9c"/>
<path d="M313 518 H321.6 L325.2 521.6 V532 H313Z" fill="#f4f4f4"/>
<path d="M314.3 519.3 H321 L323.9 522.2 V530.7 H314.3Z" fill="#262626"/>
<rect x="315.1" y="520.1" width="4.8" height="2.7" fill="#eeeeee"/>
<rect x="317.1" y="522.6" width="1" height="1.2" fill="#eeeeee"/>
<rect x="315.1" y="523.6" width="5.4" height="6.3" fill="#eeeeee"/>
<rect x="316" y="524.8" width="3" height="1" fill="#2a2a2a"/><rect x="319.2" y="524.8" width="0.9" height="1" fill="#2a2a2a"/>
<rect x="316" y="527.3" width="3.9" height="1.6" fill="#2a2a2a"/>
<rect x="321.1" y="523.4" width="1.4" height="6.4" fill="#e6e6e6"/>
<path d="M313 549 H321.6 L325.2 552.6 V563 H313Z" fill="#f4f4f4"/>
<path d="M314.3 550.3 H321 L323.9 553.2 V561.7 H314.3Z" fill="#262626"/>
<rect x="315.1" y="551.1" width="4.8" height="2.7" fill="#eeeeee"/>
<rect x="317.1" y="553.6" width="1" height="1.2" fill="#eeeeee"/>
<rect x="315.1" y="554.6" width="5.4" height="6.3" fill="#eeeeee"/>
<rect x="316" y="555.8" width="3" height="1" fill="#2a2a2a"/><rect x="319.2" y="555.8" width="0.9" height="1" fill="#2a2a2a"/>
<rect x="316" y="558.3" width="3.9" height="1.6" fill="#2a2a2a"/>
<rect x="321.1" y="554.4" width="1.4" height="6.4" fill="#e6e6e6"/>
</svg>
</div>
<div class="border"></div>
</body></html>
